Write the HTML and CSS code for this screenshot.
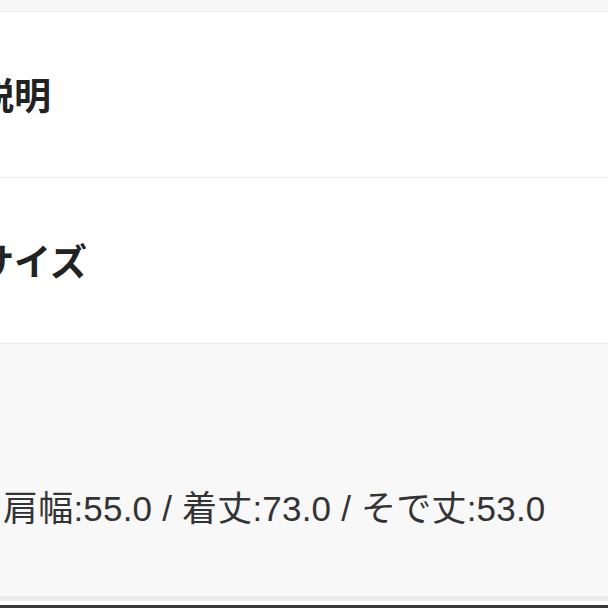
FILE: index.html
```html
<!DOCTYPE html>
<html lang="ja">
<head>
  <meta charset="UTF-8" />
  <meta name="viewport" content="width=device-width, initial-scale=1" />
  <title>商品の説明</title>
  <link rel="stylesheet" href="styles.css">
</head>
<body>
  <div class="top-band"></div>

  <section class="row">
    <h2 class="row-title">説明</h2>
  </section>

  <section class="row">
    <h2 class="row-title">サイズ</h2>
  </section>

  <section class="spec">
    <p class="spec-text">肩幅:55.0 / 着丈:73.0 / そで丈:53.0</p>
  </section>

  <div class="bottom-bar"></div>
</body>
</html>
```

FILE: styles.css
```css
:root {
  --text: #222;
  --body-text: #333;
  --band: #f7f7f7;
  --line: #ececec;
  --spec-bg: #f8f8f8;
}

* {
  box-sizing: border-box;
  margin: 0;
  padding: 0;
}

body {
  font-family: "Noto Sans CJK JP", "Noto Sans", sans-serif;
  background: #fff;
  color: var(--text);
  width: 608px;
  height: 608px;
  overflow: hidden;
  display: flex;
  flex-direction: column;
}

.top-band {
  height: 12px;
  background: var(--band);
  border-bottom: 1px solid var(--line);
}

.row {
  height: 166px;
  display: flex;
  align-items: center;
  border-bottom: 1px solid var(--line);
  background: #fff;
}

.row:last-of-type {
  border-bottom: none;
}

.row-title {
  font-size: 37px;
  font-weight: 700;
  line-height: 1;
  margin-left: -23px;
  white-space: nowrap;
}

.spec {
  flex: 1;
  background: var(--spec-bg);
  display: flex;
  align-items: flex-end;
  padding: 0 0 70px 3px;
  border-bottom: 5px solid #ececec;
}

.spec-text {
  font-family: "Liberation Sans", "Noto Sans CJK JP", sans-serif;
  font-size: 35px;
  letter-spacing: 0.2px;
  line-height: 1;
  color: var(--body-text);
  white-space: nowrap;
}

.bottom-bar {
  height: 7px;
  background: #fff;
  border-bottom: 3px solid #3a3a3a;
}
```
